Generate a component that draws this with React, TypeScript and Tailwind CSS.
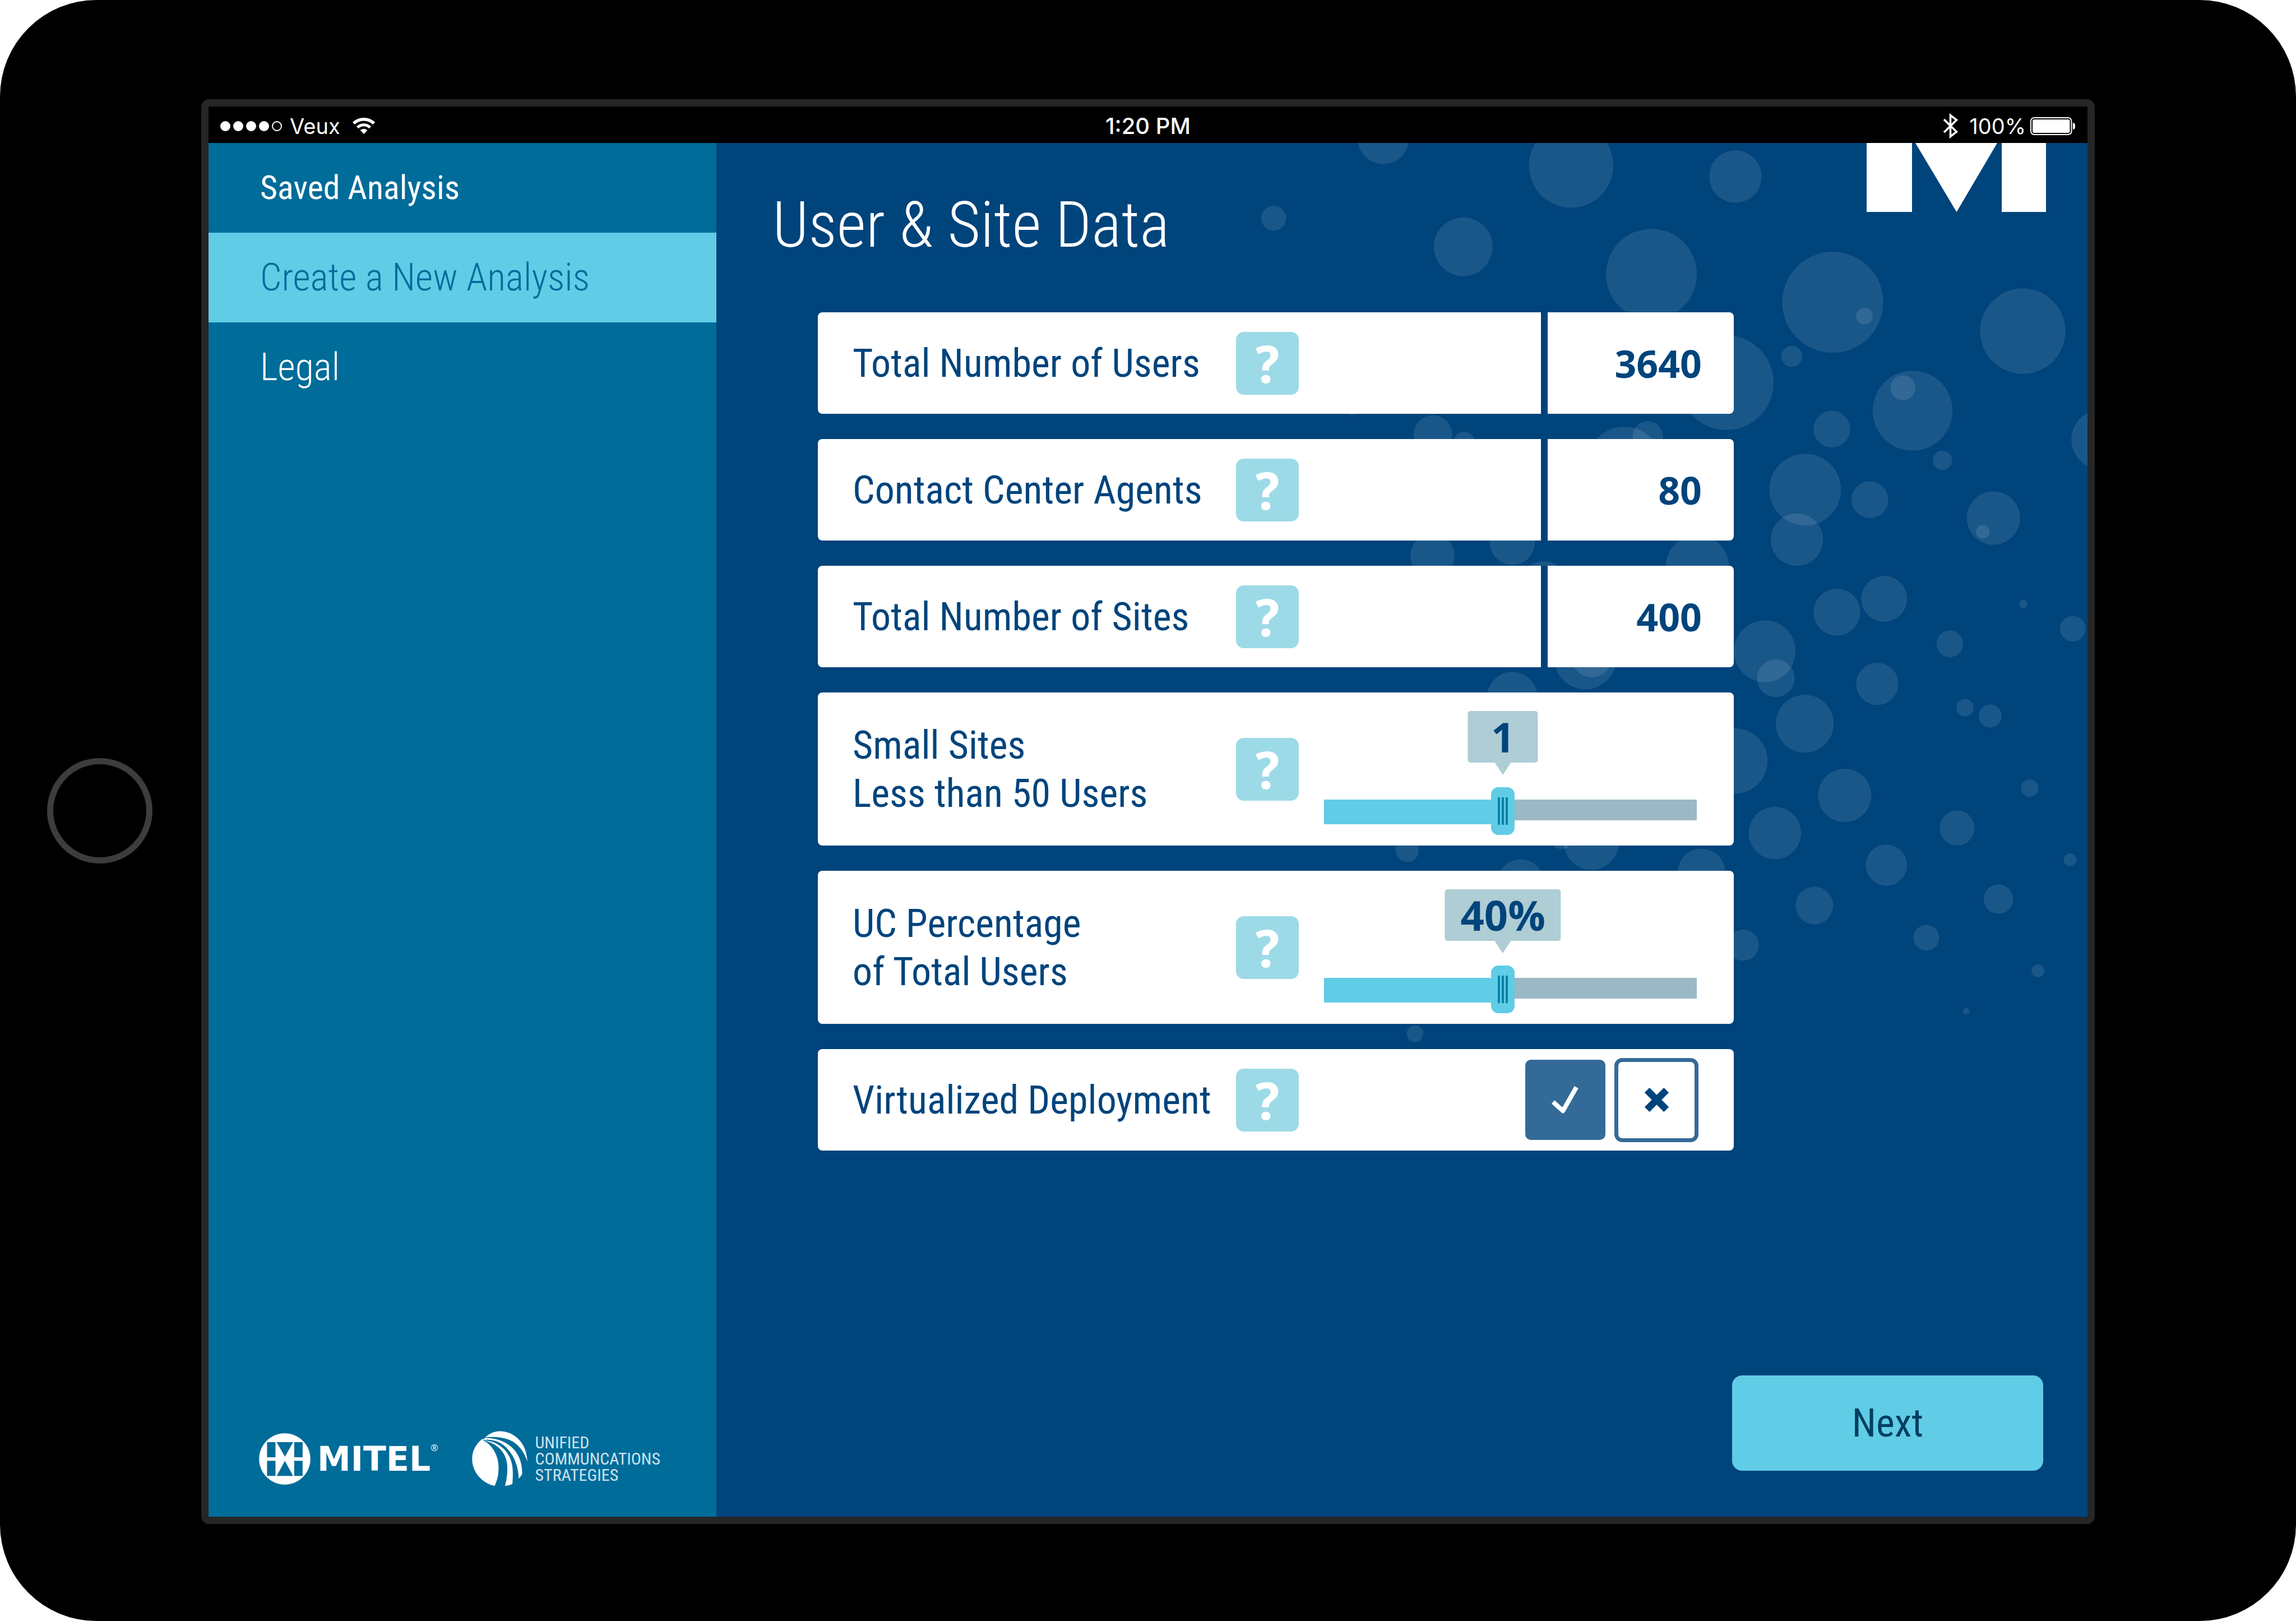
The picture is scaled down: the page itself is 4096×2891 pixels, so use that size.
import { useState } from "react";
import type { ReactNode } from "react";

const CONDENSED = "font-['Roboto_Condensed','Noto_Sans',sans-serif]";

/* Backdrop bubbles: [centre x, centre y, radius] */
const BUBBLES: [number, number, number][] = [
  [3016, 302, 56], [3425, 361, 92], [3783, 385, 57], [2777, 476, 27], [3190, 538, 64],
  [3600, 598, 99], [3995, 659, 110], [4064, 689, 18], [4409, 722, 93], [3763, 834, 103],
  [3906, 777, 23], [4169, 895, 87], [4148, 845, 27], [3993, 935, 40], [4580, 958, 65],
  [4234, 1003, 21], [3935, 1067, 78], [3917, 1176, 57], [4076, 1089, 40], [4345, 1129, 58],
  [4322, 1159, 15], [3124, 947, 42], [3192, 965, 24], [2948, 893, 12], [3541, 1012, 82],
  [3592, 951, 33], [3123, 1211, 48], [3297, 1182, 49], [3365, 1273, 50], [3700, 1235, 69],
  [4004, 1334, 51], [4107, 1305, 50], [4410, 1316, 9], [4518, 1370, 28], [4250, 1403, 29],
  [3847, 1419, 67], [3871, 1478, 41], [4092, 1490, 46], [4283, 1542, 19], [4338, 1560, 25],
  [3934, 1577, 63], [3782, 1658, 71], [4021, 1733, 58], [3869, 1815, 57], [4424, 1717, 19],
  [4266, 1804, 38], [4512, 1873, 14], [4112, 1885, 45], [4356, 1959, 32], [3955, 1973, 41],
  [4199, 2043, 28], [3800, 2059, 34], [4442, 2115, 14], [4286, 2203, 7], [3085, 2252, 18],
  [3068, 1853, 25], [3297, 1519, 55], [3456, 1434, 68], [3470, 1431, 45], [3469, 1835, 60],
  [3404, 1825, 25], [3315, 1923, 51], [3709, 1901, 52],
];

function Bubbles() {
  return (
    <svg
      className="absolute inset-0 size-full"
      viewBox="1562 312 2988 2992"
      preserveAspectRatio="xMaxYMin slice"
      aria-hidden="true"
    >
      {BUBBLES.map(([x, y, r]) => (
        <circle key={`${x}-${y}`} cx={x} cy={y} r={r} fill="#fff" fillOpacity="0.1" />
      ))}
    </svg>
  );
}

function StatusBar() {
  return (
    <div className="grid h-[65px] shrink-0 grid-cols-3 items-center bg-black pt-[4px] font-['Inter',sans-serif] text-[38px] leading-none text-white">
      <div className="flex items-center pl-[21px]">
        <div className="flex gap-[5px]">
          {[0, 1, 2, 3].map((i) => (
            <span key={i} className="size-[18px] rounded-full bg-white" />
          ))}
          <span className="size-[18px] rounded-full border-2 border-white" />
        </div>
        <span className="ml-[14px]">Veux</span>
        <svg className="ml-[22px] h-[29px] w-[40px]" viewBox="0 0 40 29" fill="none" aria-hidden="true">
          <path d="M1.8 10.1A26.2 26.2 0 0 1 38.2 10.1" stroke="#fff" strokeWidth="5.4" />
          <path d="M8.7 17.3A16.3 16.3 0 0 1 31.3 17.3" stroke="#fff" strokeWidth="5.2" />
          <path d="M20 29L13.5 22.3A9.3 9.3 0 0 1 26.5 22.3Z" fill="#fff" />
        </svg>
      </div>
      <span className="text-center text-[40px] font-medium">1:20 PM</span>
      <div className="flex items-center justify-end pr-[22px]">
        <svg className="mr-[20px] h-[45px] w-[27px]" viewBox="0 0 27 45" fill="none" aria-hidden="true">
          <path d="M2 11L24.5 33L13.5 41.5V3.5L24.5 12L2 34" stroke="#fff" strokeWidth="3.6" />
        </svg>
        <span>100%</span>
        <svg className="ml-[8px] h-[32px] w-[80px]" viewBox="0 0 80 32" fill="none" aria-hidden="true">
          <rect x="1" y="1" width="72.500" height="30" rx="6" stroke="#fff" strokeWidth="2" />
          <rect x="4" y="4" width="66.500" height="24" rx="3" fill="#fff" />
          <path d="M76 10C79 10.500 80 12 80 16S79 21.500 76 22Z" fill="#fff" />
        </svg>
      </div>
    </div>
  );
}

function MitelLogo() {
  return (
    <div className="flex items-center">
      <svg className="size-[92px]" viewBox="26 32 336 338" aria-hidden="true">
        <circle cx="194" cy="201" r="168" fill="#fff" />
        <g fill="#006c9a">
          <rect x="78" y="91" width="55" height="99" />
          <rect x="78" y="213" width="55" height="99" />
          <rect x="256" y="91" width="55" height="99" />
          <rect x="256" y="213" width="55" height="99" />
          <path d="M141 91H249L195 186Z" />
          <path d="M141 312H249L195 214Z" />
        </g>
      </svg>
      <span className="ml-[12px] font-['DejaVu_Sans',sans-serif] text-[60px] leading-none font-bold">MITEL</span>
      <span className="mb-[40px] font-['Open_Sans',sans-serif] text-[16px] leading-none">®</span>
    </div>
  );
}

function UcsLogo() {
  return (
    <div className="flex items-center">
      <svg className="size-[99px]" viewBox="31 31 365 363" aria-hidden="true">
        <g fill="#fff">
          <path d="M117 73C150 44 182 32 214 32C310 32 392 110 395 232C375 170 340 115 275 88C225 69 170 66 117 73Z" />
          <path d="M103 93C160 115 206 190 206 268C206 315 200 350 180 391C95 372 32 300 32 213C32 160 60 110 103 80Z" />
          <path d="M108 94C170 92 245 130 280 205C303 255 302 310 297 378C284 384 268 389 248 391C262 340 267 290 261 240C248 155 180 108 108 94Z" />
          <path d="M117 75L100 92L128 88C200 88 247 120 282 170C318 215 336 280 339 343C348 334 355 324 362 312C362 265 355 215 322 165C275 100 200 72 117 75Z" />
        </g>
        <path
          d="M117 75C190 62 265 84 310 125C350 162 375 200 390 232C386 262 376 290 362 312C362 265 352 205 310 155C262 100 190 76 117 75Z"
          fill="#006c9a"
        />
        <path d="M130 90C200 95 262 140 290 200" stroke="#006c9a" strokeWidth="6" fill="none" />
      </svg>
      <p className={`ml-[14px] ${CONDENSED} text-[30px] leading-[29px] text-[#cfe3ee]`}>
        UNIFIED
        <br />
        COMMUNCATIONS
        <br />
        STRATEGIES
      </p>
    </div>
  );
}

function Sidebar() {
  return (
    <aside className="flex w-[906px] shrink-0 flex-col bg-[#006c9a] text-white">
      <nav className={`${CONDENSED} text-[68px] leading-[160px] font-light`}>
        <a href="#saved" className="block pl-[92px] text-[60px] font-normal">Saved Analysis</a>
        <a href="#create" aria-current="page" className="block bg-[#60cce6] pl-[92px] text-[#006c9a]">
          Create a New Analysis
        </a>
        <a href="#legal" className="block pl-[92px]">Legal</a>
      </nav>
      <div className="mt-auto flex items-center pb-[54px] pl-[90px]">
        <MitelLogo />
        <div className="ml-[60px]">
          <UcsLogo />
        </div>
      </div>
    </aside>
  );
}

function Row({ label, htmlFor, tall, children }: { label: ReactNode; htmlFor?: string; tall?: boolean; children: ReactNode }) {
  return (
    <div className={`flex overflow-hidden rounded-[8px] bg-white ${tall ? "h-[273px]" : "h-[181px]"}`}>
      <div className={`flex w-[746px] shrink-0 items-center pl-[62px] ${CONDENSED} text-[70px] leading-[86px] text-[#00447c]`}>
        {htmlFor ? <label htmlFor={htmlFor}>{label}</label> : <span id="virtualized">{label}</span>}
      </div>
      <button
        type="button"
        aria-label="Help"
        className="size-[112px] shrink-0 self-center rounded-[14px] bg-[#9ddae7] font-['Noto_Sans_Display','Noto_Sans',sans-serif] text-[92px] leading-[112px] font-bold text-white"
      >
        ?
      </button>
      {children}
    </div>
  );
}

function NumberRow({ id, label, initial }: { id: string; label: string; initial: string }) {
  const [value, setValue] = useState(initial);
  return (
    <Row label={label} htmlFor={id}>
      <input
        id={id}
        type="text"
        inputMode="numeric"
        value={value}
        onChange={(e) => setValue(e.target.value)}
        className="ml-auto w-[344px] border-l-12 border-[#00447c] pr-[57px] text-right font-['Open_Sans',sans-serif] text-[68px] font-bold text-[#00447c] outline-none"
      />
    </Row>
  );
}

function SliderRow({ id, label, format }: { id: string; label: ReactNode; format: (position: number) => string }) {
  const [position, setPosition] = useState(48);
  return (
    <Row label={label} htmlFor={id} tall>
      <div className="mr-[66px] ml-[45px] flex flex-1 flex-col pt-[33px]">
        <div className="relative h-[114px]">
          <div
            className="absolute top-0 flex -translate-x-1/2 flex-col items-center"
            style={{ left: `${position}%` }}
          >
            <output
              htmlFor={id}
              className="h-[92px] min-w-[125px] rounded-[5px] bg-[#aecdd4] px-[28px] text-center font-['Open_Sans',sans-serif] text-[74px] leading-[92px] font-bold text-[#00447c]"
            >
              {format(position)}
            </output>
            <svg className="h-[22px] w-[29px]" viewBox="0 0 29 22" aria-hidden="true">
              <path d="M0 0H29L14.500 22Z" fill="#aecdd4" />
            </svg>
          </div>
        </div>
        <div className="relative mt-[22px] h-[85px]">
          <div className="flex h-full items-start pt-[22px]">
            <div className="h-[44px] bg-[#60cce6]" style={{ width: `${position}%` }} />
            <div className="h-[37px] flex-1 bg-[#9bb9c5]" />
          </div>
          <div
            className="absolute top-0 flex h-[85px] w-[42px] -translate-x-1/2 items-center justify-center gap-[3px] rounded-[13px] bg-[#60cce6]"
            style={{ left: `${position}%` }}
          >
            <span className="h-[49px] w-[4px] bg-[#0083aa]" />
            <span className="h-[49px] w-[4px] bg-[#0083aa]" />
            <span className="h-[49px] w-[4px] bg-[#0083aa]" />
          </div>
          <input
            id={id}
            type="range"
            min={0}
            max={100}
            value={position}
            onChange={(e) => setPosition(Number(e.target.value))}
            className="absolute inset-0 size-full cursor-pointer opacity-0"
          />
        </div>
      </div>
    </Row>
  );
}

function ToggleRow() {
  return (
    <Row label="Virtualized Deployment">
      <div role="group" aria-labelledby="virtualized" className="mr-[63px] ml-auto flex items-center gap-[16px]">
        <button type="button" aria-label="Yes" aria-pressed="true" className="size-[143px] rounded-[10px] bg-[#336a98]">
          <svg className="size-full" viewBox="0 0 268 268" fill="none" aria-hidden="true">
            <path d="M93 141L126 171L171 92" stroke="#fff" strokeWidth="15" strokeLinejoin="round" />
          </svg>
        </button>
        <button
          type="button"
          aria-label="No"
          aria-pressed="false"
          className="flex size-[150px] items-center justify-center rounded-[14px] border-[7px] border-[#336a98] bg-white"
        >
          <svg className="size-[43px]" viewBox="0 0 80 80" fill="none" aria-hidden="true">
            <path d="M8 8L72 72M72 8L8 72" stroke="#00447c" strokeWidth="23" />
          </svg>
        </button>
      </div>
    </Row>
  );
}

function Main() {
  return (
    <main className="relative flex flex-1 flex-col overflow-hidden bg-[#00447c]">
      <Bubbles />
      <svg className="absolute top-0 right-[74px] h-[123px] w-[320px]" viewBox="0 0 320 123" fill="#fff" aria-hidden="true">
        <path d="M0 0H81V123H0ZM87 0H233L160.500 123ZM241 0H320V123H241Z" />
      </svg>
      <h1 className={`relative mt-[77px] pl-[100px] ${CONDENSED} text-[113px] leading-[140px] font-light text-white`}>
        User &amp; Site Data
      </h1>
      <form className="relative mt-[85px] flex flex-1 flex-col" onSubmit={(e) => e.preventDefault()}>
        <div className="ml-[181px] flex max-w-[1634px] flex-col gap-[45px]">
          <NumberRow id="users" label="Total Number of Users" initial="3640" />
          <NumberRow id="agents" label="Contact Center Agents" initial="80" />
          <NumberRow id="sites" label="Total Number of Sites" initial="400" />
          <SliderRow
            id="small-sites"
            label={<>Small Sites<br />Less than 50 Users</>}
            format={(p) => String(Math.round(p / 48))}
          />
          <SliderRow
            id="uc-percentage"
            label={<>UC Percentage<br />of Total Users</>}
            format={(p) => `${Math.min(100, Math.round((p * 5) / 6))}%`}
          />
          <ToggleRow />
        </div>
        <button
          type="submit"
          className={`mt-auto mr-[79px] mb-[82px] h-[170px] w-[555px] self-end rounded-[18px] bg-[#60cce6] ${CONDENSED} text-[70px] text-[#003f5f]`}
        >
          Next
        </button>
      </form>
    </main>
  );
}

export default function App() {
  return (
    <div className="min-h-screen bg-white">
      <div className="flex min-h-screen rounded-[172px] bg-black">
        <div className="flex w-[359px] shrink-0 items-center justify-center pr-[4px]">
          <button type="button" aria-label="Home" className="size-[188px] rounded-full border-[11px] border-[#3d3d3d]" />
        </div>
        <div className="mt-[177px] mb-[173px] flex flex-1 flex-col overflow-hidden rounded-[14px] bg-[#262626] p-[13px]">
          <StatusBar />
          <div className="flex flex-1">
            <Sidebar />
            <Main />
          </div>
        </div>
        <div className="w-[359px] shrink-0" />
      </div>
    </div>
  );
}
